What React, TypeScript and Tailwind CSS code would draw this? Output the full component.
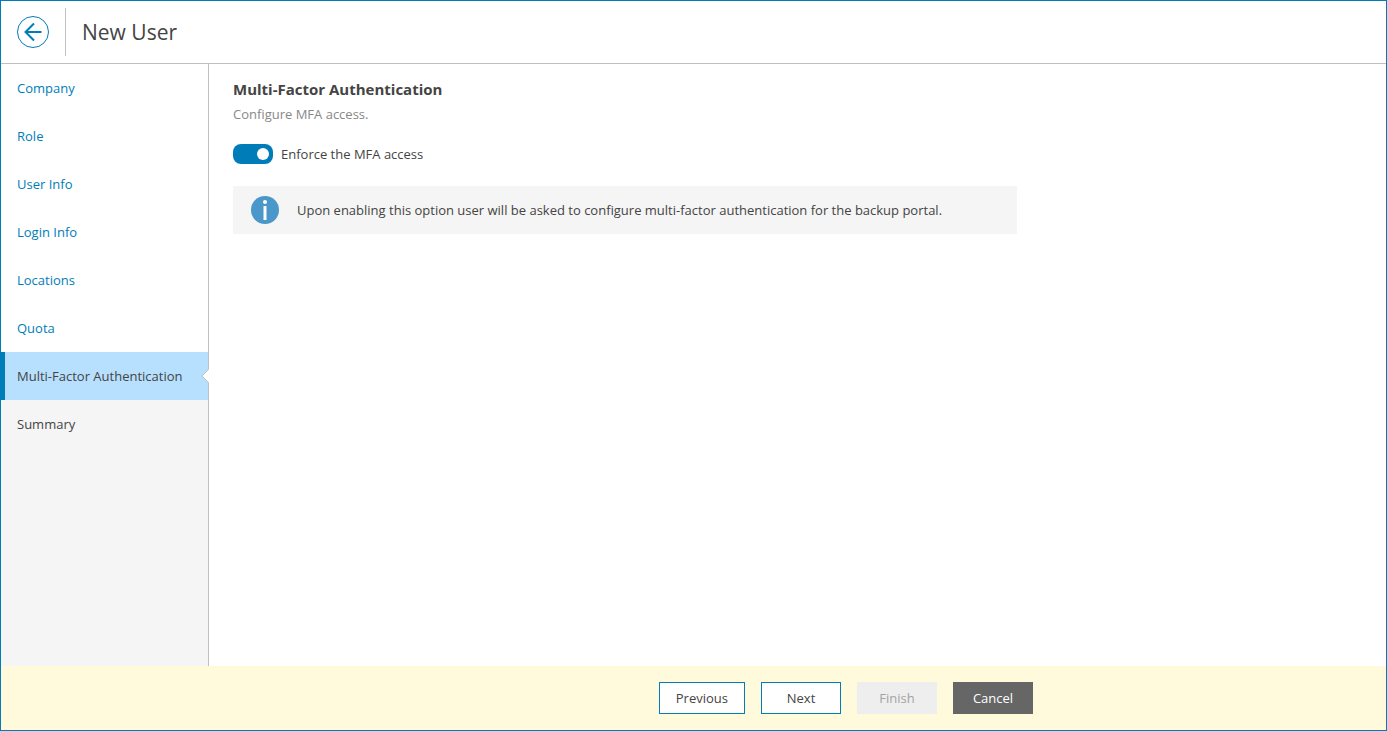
import { useState } from "react";

type Step = {
  label: string;
  state: "done" | "current" | "upcoming";
};

const STEPS: Step[] = [
  { label: "Company", state: "done" },
  { label: "Role", state: "done" },
  { label: "User Info", state: "done" },
  { label: "Login Info", state: "done" },
  { label: "Locations", state: "done" },
  { label: "Quota", state: "done" },
  { label: "Multi-Factor Authentication", state: "current" },
  { label: "Summary", state: "upcoming" },
];

const STEP_STYLES = {
  done: "bg-white text-[#007db8]",
  current: "relative bg-[#b7e0ff]",
  upcoming: "",
};

const BackIcon = () => (
  <svg width="32" height="32" viewBox="0 0 32 32" fill="none" stroke="#007db8">
    <circle cx="16" cy="16" r="15.5" />
    <path d="M24.5 16H9M17 7.5L8.5 16l8.5 8.5" strokeWidth="2" />
  </svg>
);

const InfoIcon = () => (
  <svg width="28" height="28" viewBox="0 0 28 28" className="shrink-0">
    <circle cx="14" cy="14" r="14" fill="#4a97c9" />
    <circle cx="14" cy="6" r="2" fill="#fff" />
    <rect x="12.5" y="10" width="3" height="14" fill="#fff" />
  </svg>
);

const StepItem = ({ label, state }: Step) => (
  <li className={`flex h-12 ${STEP_STYLES[state]}`}>
    {state === "current" && (
      <span className="absolute inset-y-0 left-0 w-1 bg-[#007db8]" />
    )}
    <a
      href="#"
      aria-current={state === "current" ? "step" : undefined}
      className="flex flex-1 items-center pl-4"
    >
      {label}
    </a>
    {/* Notch pointing from the content pane into the current step */}
    {state === "current" && (
      <svg
        className="absolute top-4 -right-px"
        width="8"
        height="16"
        viewBox="0 0 8 16"
      >
        <path d="M8 1L1 8l7 7z" fill="#fff" />
        <path d="M7.5 1.5L1 8l6.5 6.5" fill="none" stroke="#c0c0c0" />
      </svg>
    )}
  </li>
);

type WizardButtonProps = {
  label: string;
  className: string;
  disabled?: boolean;
};

const WizardButton = ({ label, className, disabled }: WizardButtonProps) => (
  <button
    type="button"
    disabled={disabled}
    className={`h-8 min-w-20 border px-4 ${className}`}
  >
    {label}
  </button>
);

export default function App() {
  const [enforced, setEnforced] = useState(true);

  return (
    <div className="flex min-h-screen flex-col border border-[#007db8] bg-white font-['Open_Sans',sans-serif] text-[13px] leading-5 text-[#444]">
      <header className="flex h-[63px] items-center border-b border-[#c0c0c0] pl-4">
        <button type="button" aria-label="Back">
          <BackIcon />
        </button>
        <div className="mx-4 h-12 w-px bg-[#c0c0c0]" />
        <h1 className="text-[21px] leading-8">New User</h1>
      </header>

      <div className="flex flex-1">
        <nav className="w-52 shrink-0 border-r border-[#c0c0c0] bg-[#f5f5f5]">
          <ul>
            {STEPS.map((step) => (
              <StepItem key={step.label} {...step} />
            ))}
          </ul>
        </nav>

        <main className="flex-1 px-6 pt-4">
          <h2 className="text-[15px] leading-[18px] font-bold">
            Multi-Factor Authentication
          </h2>
          <p className="mt-1.5 text-[#888]">Configure MFA access.</p>

          <label className="mt-5 flex w-fit items-center gap-2">
            <input
              type="checkbox"
              role="switch"
              checked={enforced}
              onChange={(e) => setEnforced(e.target.checked)}
              className="peer sr-only"
            />
            <span className="flex h-5 w-10 items-center rounded-lg bg-[#999] px-1 peer-checked:justify-end peer-checked:bg-[#007db8]">
              <span className="size-3 rounded-full bg-white" />
            </span>
            Enforce the MFA access
          </label>

          <div className="mt-[22px] flex min-h-12 max-w-[784px] items-center gap-[18px] bg-[#f5f5f5] px-[18px]">
            <InfoIcon />
            <p>
              Upon enabling this option user will be asked to configure
              multi-factor authentication for the backup portal.
            </p>
          </div>
        </main>
      </div>

      <footer className="bg-[#fffadb]">
        <div className="flex max-w-[1032px] justify-end gap-4 py-4">
          <WizardButton label="Previous" className="border-[#007db8] bg-white" />
          <WizardButton label="Next" className="border-[#007db8] bg-white" />
          <WizardButton
            label="Finish"
            className="border-[#eee] bg-[#eee] text-[#a3a3a3]"
            disabled
          />
          <WizardButton
            label="Cancel"
            className="border-[#666] bg-[#666] text-white"
          />
        </div>
      </footer>
    </div>
  );
}
